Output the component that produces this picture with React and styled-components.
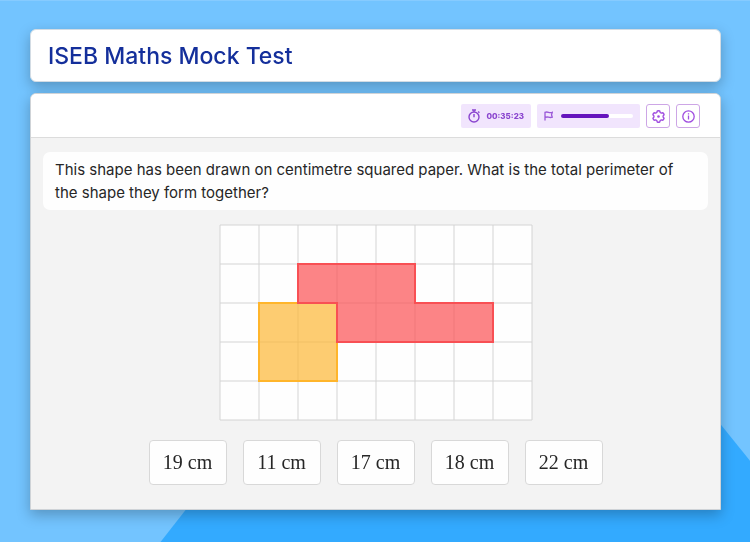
import React from "react"
import styled, { createGlobalStyle } from "styled-components"

const COLS = 8
const ROWS = 5
const CELL = 39

const ANSWERS = ["19 cm", "11 cm", "17 cm", "18 cm", "22 cm"]

const range = (count) => Array.from({ length: count }, (_, i) => i)
const points = (cells) => cells.map(([x, y]) => `${x * CELL},${y * CELL}`).join(" ")

const SQUARE = [[1, 2], [3, 2], [3, 4], [1, 4]]
const STEP = [[2, 1], [5, 1], [5, 2], [7, 2], [7, 3], [3, 3], [3, 2], [2, 2]]

function StopwatchIcon() {
  return (
    <svg width="12" height="14" viewBox="0 0 12 14" fill="none" stroke="#8a45cf" strokeWidth="1.4" aria-hidden="true">
      <circle cx="6" cy="8" r="5" />
      <path d="M4 1h4M6 1v2M10.2 2.6l1.2 1.2M6 5v3.2" />
    </svg>
  )
}

function FlagIcon() {
  return (
    <svg width="9" height="10" viewBox="0 0 9 10" fill="none" stroke="#9a58d8" strokeWidth="1.3" aria-hidden="true">
      <path d="M1 9.5V1.3c1.4-.5 2.5-.3 3.5 0s2.5.5 3.8 0L7.5 3.8l.8 2.4c-1.3.5-2.8.3-3.8 0s-2.1-.3-3.5.2" />
    </svg>
  )
}

function SettingsIcon() {
  return (
    <svg width="13" height="13" viewBox="0 0 13 13" fill="none" stroke="#a04ee0" strokeWidth="1.4" strokeLinejoin="round" aria-hidden="true">
      <path d="M5.3 1Q6.5.5 7.7 1l.5 1.5 1.1.6 1.6-.3q1 .8 1.2 2l-1 1.1v1.2l1 1.1q-.2 1.2-1.2 2l-1.6-.3-1.1.6-.5 1.5q-1.2.5-2.4 0l-.5-1.5-1.1-.6-1.600.3q-1-.8-1.2-2l1-1.1V5.9l-1-1.1q.2-1.2 1.2-2l1.6.3 1.1-.6z" />
      <circle cx="6.5" cy="6.5" r="1.3" fill="#a04ee0" stroke="none" />
    </svg>
  )
}

function InfoIcon() {
  return (
    <svg width="13" height="13" viewBox="0 0 13 13" fill="none" stroke="#a04ee0" strokeWidth="1.3" aria-hidden="true">
      <circle cx="6.5" cy="6.5" r="5.7" />
      <path d="M6.5 5.6v4M6.5 3.3v1.3" />
    </svg>
  )
}

function SquaredPaper() {
  return (
    <Paper viewBox={`-1 -1 ${COLS * CELL + 2} ${ROWS * CELL + 2}`} role="img" aria-label="Two shapes on squared paper">
      <rect width={COLS * CELL} height={ROWS * CELL} fill="#fefefe" />
      <g stroke="#d4d4d4">
        {range(COLS + 1).map((i) => (
          <line key={i} x1={i * CELL} x2={i * CELL} y1="0" y2={ROWS * CELL} />
        ))}
        {range(ROWS + 1).map((i) => (
          <line key={i} x1="0" x2={COLS * CELL} y1={i * CELL} y2={i * CELL} />
        ))}
      </g>
      <polygon points={points(SQUARE)} fill="#fcb735" fillOpacity="0.7" stroke="#ffb52b" strokeWidth="2" />
      <polygon points={points(STEP)} fill="#fb5558" fillOpacity="0.72" stroke="#f85054" strokeWidth="2" />
    </Paper>
  )
}

export default function App() {
  return (
    <>
      <GlobalStyle />
      <Backdrop />
      <Page>
        <Header>
          <Title>ISEB Maths Mock Test</Title>
        </Header>
        <Panel>
          <Toolbar>
            <Pill $gap={6}>
              <StopwatchIcon />
              <Time>00:35:23</Time>
            </Pill>
            <Pill $gap={8}>
              <FlagIcon />
              <Track role="progressbar" aria-label="Progress" aria-valuenow={67} aria-valuemin={0} aria-valuemax={100}>
                <Fill style={{ width: "67%" }} />
              </Track>
            </Pill>
            <IconButton type="button" aria-label="Settings">
              <SettingsIcon />
            </IconButton>
            <IconButton type="button" aria-label="Information">
              <InfoIcon />
            </IconButton>
          </Toolbar>
          <Content>
            <Question>
              This shape has been drawn on centimetre squared paper. What is the total perimeter of the shape they
              form together?
            </Question>
            <SquaredPaper />
            <Answers>
              {ANSWERS.map((answer) => (
                <Answer key={answer} type="button">
                  {answer}
                </Answer>
              ))}
            </Answers>
          </Content>
        </Panel>
      </Page>
    </>
  )
}

const GlobalStyle = createGlobalStyle`
  * {
    box-sizing: border-box;
  }

  body {
    margin: 0;
    background: #73c4ff;
    font-family: Inter, "Liberation Sans", sans-serif;
  }
`

const Backdrop = styled.div`
  position: fixed;
  inset: 0;
  background: #33aaff;
  clip-path: polygon(64.4% 24%, 100% 85%, 100% 100%, 21.4% 100%);
`

const Page = styled.main`
  position: relative;
  display: flex;
  flex-direction: column;
  gap: 11px;
  min-height: 100vh;
  padding: 28px 29px 32px 30px;
  border-top: 1px solid #86cbff;
`

const Header = styled.header`
  padding: 12px 17px 11px;
  border: 1px solid #d3dce4;
  border-radius: 6px;
  background: #fff;
  box-shadow: 0 5px 14px rgba(0, 0, 0, 0.25);
`

const Title = styled.h1`
  margin: 0;
  color: #142f9b;
  font-size: 23px;
  font-weight: 500;
  line-height: 28px;
`

const Panel = styled.section`
  flex: 1;
  display: flex;
  flex-direction: column;
  border: 1px solid #cfd3d7;
  border-radius: 6px 6px 0 0;
  background: #f3f3f3;
  box-shadow: 0 5px 14px rgba(0, 0, 0, 0.25);
`

const Toolbar = styled.div`
  display: flex;
  justify-content: flex-end;
  gap: 6px;
  padding: 10px 20px 9px;
  border-bottom: 1px solid #dcdcdc;
  border-radius: 5px 5px 0 0;
  background: #fff;
`

const Pill = styled.div`
  display: flex;
  align-items: center;
  gap: ${(props) => props.$gap}px;
  height: 24px;
  padding: 0 7px;
  border-radius: 2px;
  background: #f1e5fd;
`

const Time = styled.time`
  color: #8a45cf;
  font-size: 8px;
  font-weight: 800;
`

const Track = styled.div`
  width: 72px;
  height: 4px;
  border-radius: 2px;
  background: #fff;
`

const Fill = styled.div`
  height: 100%;
  border-radius: 2px;
  background: #6514bd;
`

const IconButton = styled.button`
  display: flex;
  align-items: center;
  justify-content: center;
  width: 24px;
  height: 24px;
  padding: 0;
  border: 1px solid #cda6e6;
  border-radius: 3px;
  background: #fff;
  cursor: pointer;
`

const Content = styled.div`
  display: flex;
  flex-direction: column;
  align-items: center;
  gap: 14px;
  padding: 14px 12px 24px;
`

const Question = styled.p`
  align-self: stretch;
  margin: 0;
  padding: 6px 12px;
  border-radius: 7px;
  background: #fefefe;
  color: #262626;
  font-size: 15px;
  line-height: 23px;
`

const Paper = styled.svg`
  display: block;
  width: 100%;
  max-width: 314px;
`

const Answers = styled.div`
  display: flex;
  flex-wrap: wrap;
  justify-content: center;
  gap: 16px;
  margin-top: 5px;
`

const Answer = styled.button`
  width: 78px;
  height: 45px;
  padding: 0;
  border: 1px solid #d8d8d8;
  border-radius: 4px;
  background: #fefefe;
  color: #262626;
  font-family: "Liberation Serif", serif;
  font-size: 20px;
  cursor: pointer;
`
